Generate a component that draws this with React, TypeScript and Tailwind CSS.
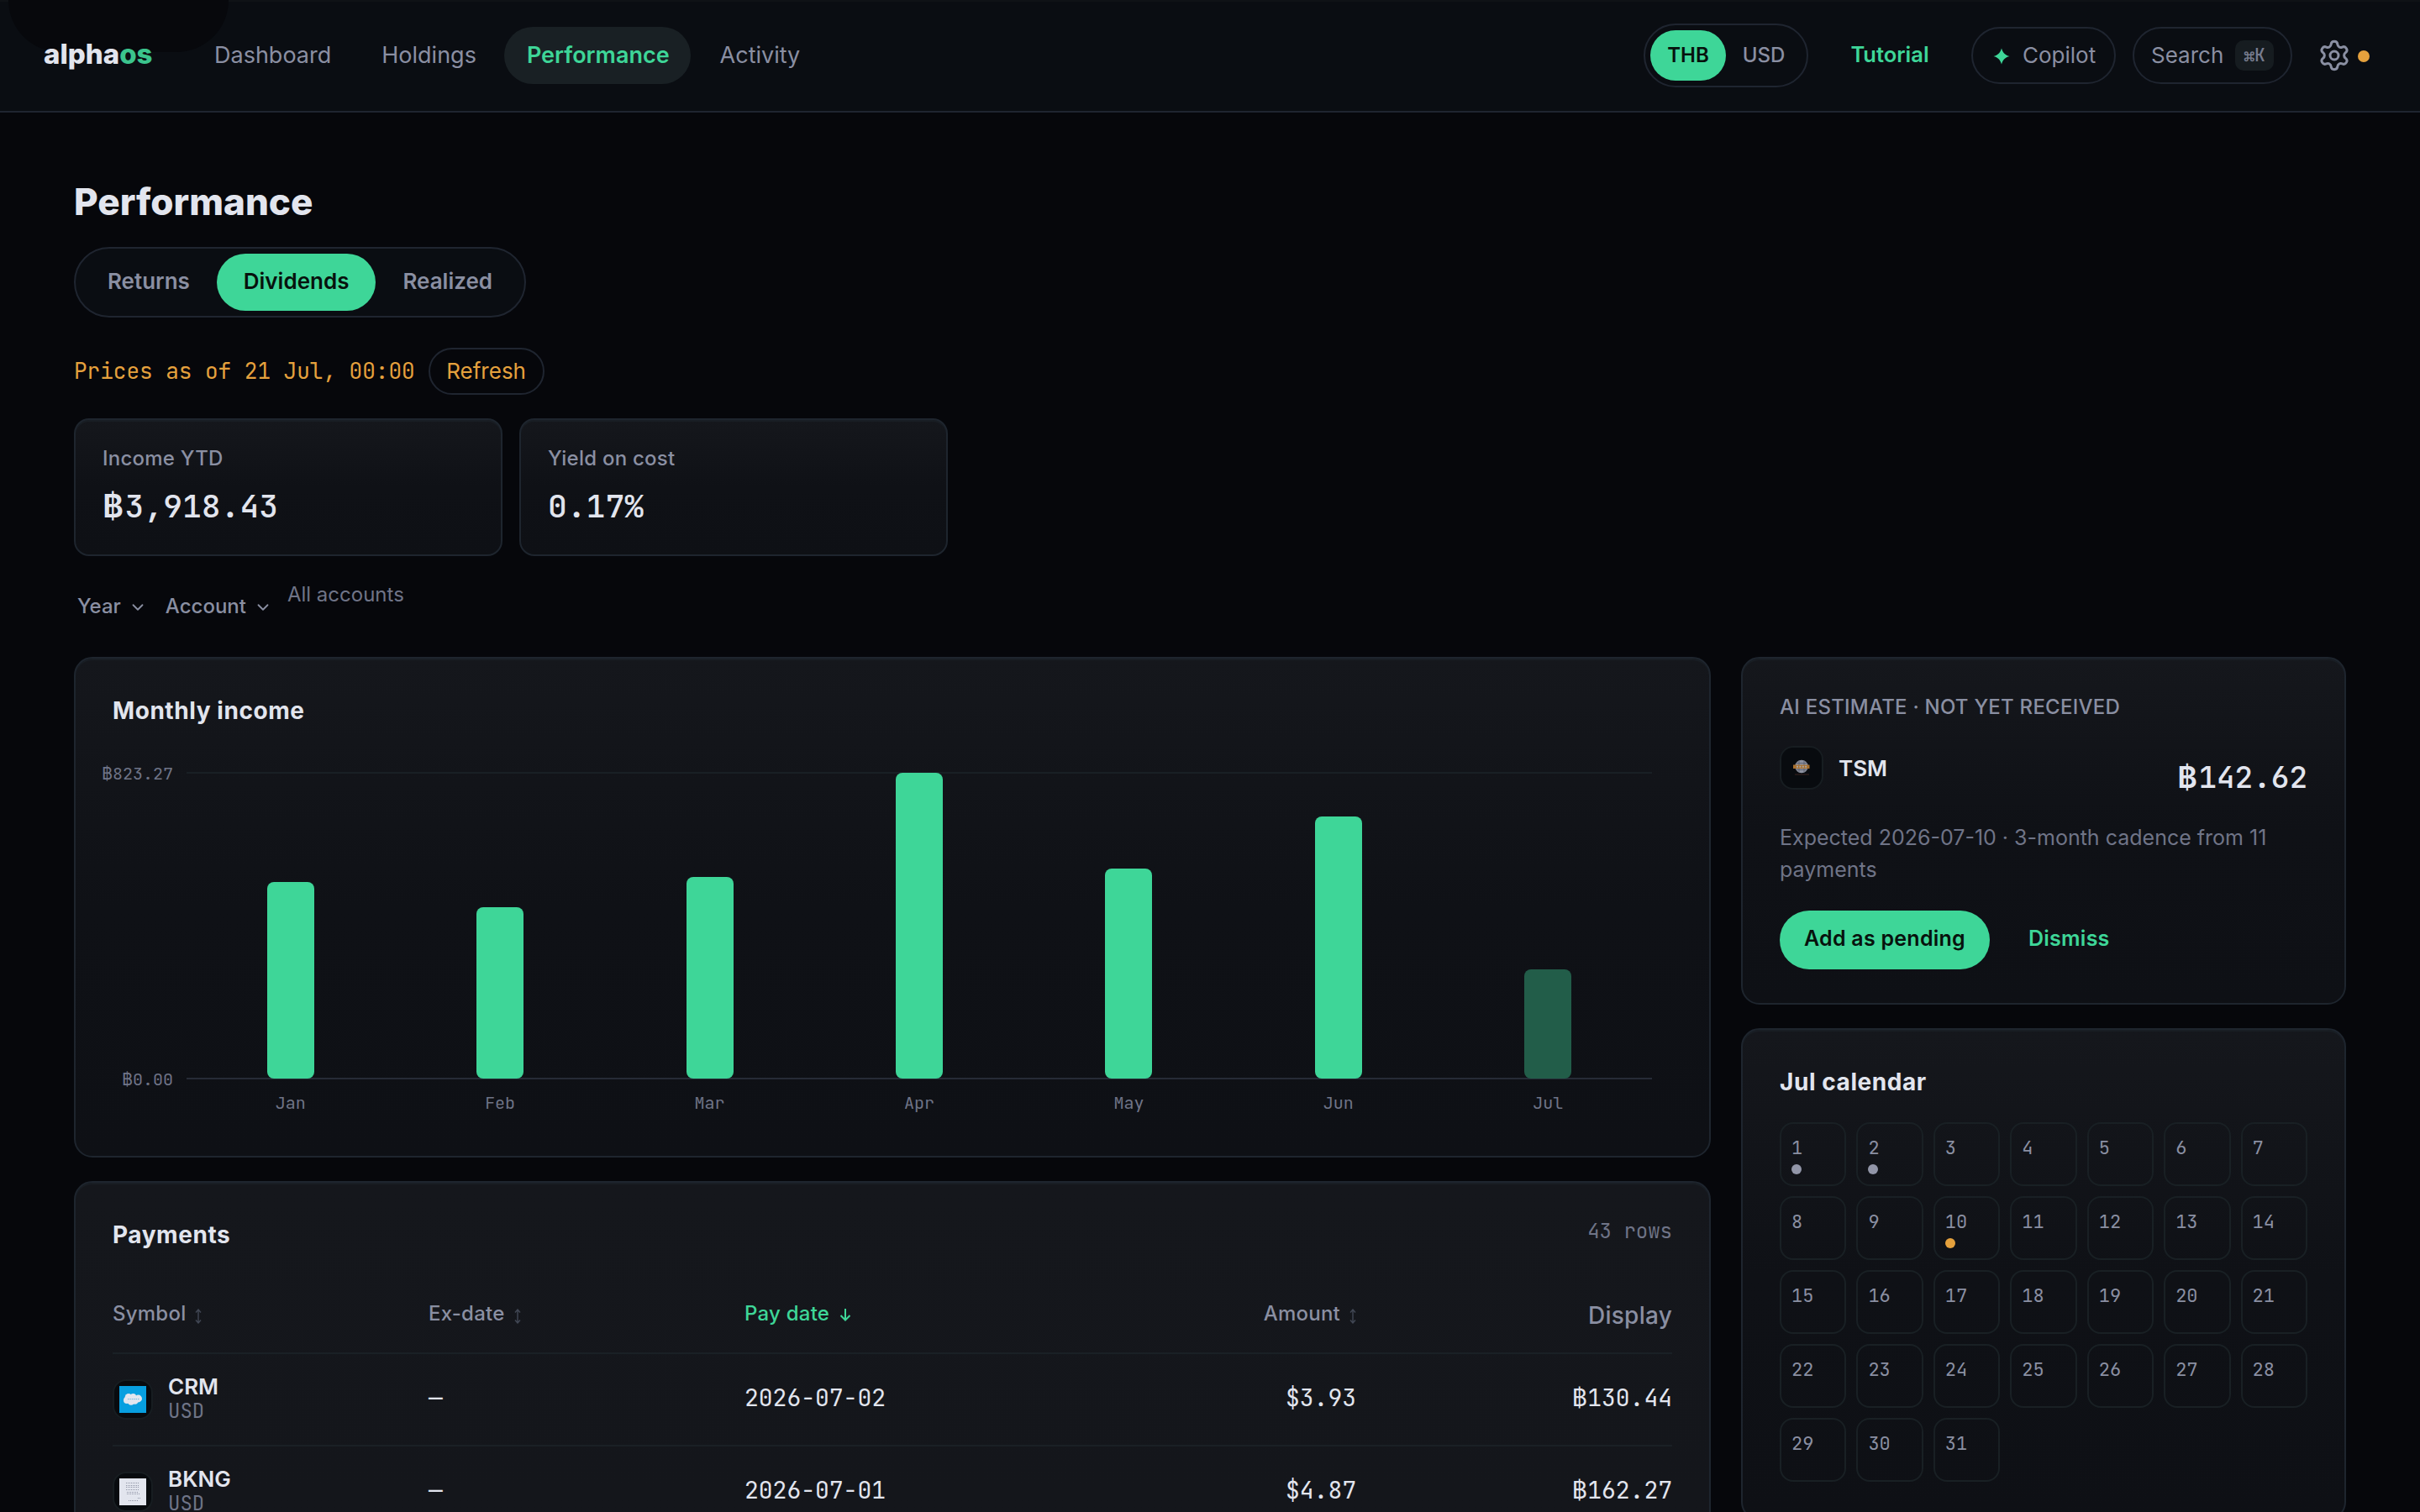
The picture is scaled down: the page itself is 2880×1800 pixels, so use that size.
import { ChevronDown, Settings } from "lucide-react";
import clsx from "clsx";
import type { ReactNode } from "react";

const NAV = ["Dashboard", "Holdings", "Performance", "Activity"];
const TABS = ["Returns", "Dividends", "Realized"];

const MONTHS = [
  { label: "Jan", height: 234 },
  { label: "Feb", height: 204 },
  { label: "Mar", height: 240 },
  { label: "Apr", height: 364 },
  { label: "May", height: 250 },
  { label: "Jun", height: 312 },
  { label: "Jul", height: 130, partial: true }
];

const PAYMENTS = [
  { symbol: "CRM", payDate: "2026-07-02", amount: "$3.93", display: "130.44" },
  { symbol: "BKNG", payDate: "2026-07-01", amount: "$4.87", display: "162.27" }
];

const DAYS = Array.from({ length: 31 }, (_, i) => i + 1);

const MONO = "font-['JetBrains_Mono','DejaVu_Sans_Mono',monospace]";

function Card({ className, children }: { className?: string; children: ReactNode }) {
  return (
    <section
      className={clsx(
        "border-2 border-[#1e252e] bg-gradient-to-b shadow-[inset_0_2px_0_#191e24]",
        className
      )}
    >
      {children}
    </section>
  );
}

// The mono face has a cramped baht sign, so it is always set in Inter.
function Baht({ value, strong }: { value: string; strong?: boolean }) {
  return (
    <span>
      <span className={clsx("font-[Inter,sans-serif]", strong && "mr-[0.04em] font-semibold")}>฿</span>
      {value}
    </span>
  );
}

function SortIcon() {
  return (
    <svg width="8" height="18" viewBox="0 0 8 18" fill="none" stroke="#414754" strokeWidth="1.4">
      <path d="M4 1v16M1 4.5 4 1l3 3.5M1 13.5 4 17l3-3.5" />
    </svg>
  );
}

function SalesforceLogo() {
  return (
    <svg width="32" height="32" viewBox="0 0 32 32">
      <rect width="32" height="32" fill="#079fe0" />
      <g fill="#e2e6ef">
        <circle cx="11" cy="13.2" r="4.3" />
        <circle cx="16.5" cy="12.6" r="3.6" />
        <circle cx="22.6" cy="15" r="4.4" />
        <circle cx="9" cy="17" r="4" />
        <circle cx="14" cy="18.6" r="4.2" />
        <circle cx="18.5" cy="18" r="3.8" />
      </g>
      <path d="M10 15.6h14" stroke="#6db5dc" strokeWidth="1" strokeDasharray="1.4 1" />
    </svg>
  );
}

function BookingLogo() {
  return (
    <svg width="32" height="32" viewBox="0 0 32 32">
      <rect width="32" height="32" fill="#e2e5ee" />
      <g stroke="#8f94a5" strokeWidth="1" strokeDasharray="1 1">
        <path d="M8 5.5h15M8 8.5h16M8 10.5h16M8 13.5h16M9 16.5h14M9 18.5h16" />
        <path d="M11 26.5h12M22 23.5h3" />
      </g>
    </svg>
  );
}

function TsmLogo() {
  return (
    <svg width="22" height="22" viewBox="0 0 22 22">
      <circle cx="11" cy="9.5" r="7.8" fill="#8d91a0" />
      <path
        d="M8 2.5v14M14 2.5v14M4 5.5h14M4 13.5h14"
        stroke="#555a68"
        strokeWidth="0.8"
      />
      <rect x="1" y="7.5" width="19.5" height="4.5" fill="#a8702f" />
      <path d="M5 9.7h12" stroke="#a9a6a4" strokeWidth="2" strokeDasharray="2 1.4" />
      <path d="M3 19h17" stroke="#33211d" strokeWidth="1.2" />
    </svg>
  );
}

function Header() {
  return (
    <header className="relative flex h-[134px] items-center overflow-hidden border-b-2 border-[#1f2530] bg-[#0a0d12] pr-[60px] pl-[52px] shadow-[inset_0_2px_0_#0f1216]">
      <div className="absolute -top-[62px] left-[10px] h-[124px] w-[262px] rounded-full bg-[#07080c]" />
      <div className="relative w-[130px] pb-[2px] text-[33px] font-extrabold text-[#e2e5ee]">
        alpha<span className="text-[#3bc48d]">os</span>
      </div>
      <nav className="ml-[46px] flex gap-2">
        {NAV.map((item) => (
          <a
            key={item}
            className={clsx(
              "flex h-[68px] items-center rounded-full pt-px pr-[25px] pl-[27px] text-[27px]",
              item === "Performance"
                ? "bg-[#192024] font-semibold text-[#3ed698]"
                : "text-[#8a8fa2]"
            )}
          >
            {item}
          </a>
        ))}
      </nav>
      <div className="ml-auto flex items-center">
        <div className="flex h-[76px] items-center rounded-full border-2 border-[#1f2530] p-[6px] text-[24px]">
          <button className="flex h-[60px] w-[90px] items-center justify-center rounded-full bg-[#3ed698] pb-px font-semibold text-[#07120d]">
            THB
          </button>
          <button className="flex h-[60px] w-[90px] items-center justify-center rounded-full pb-px font-medium text-[#8a8fa2]">
            USD
          </button>
        </div>
        <button className="w-[194px] pb-[2px] text-center text-[25.5px] font-semibold text-[#3ed698]">
          Tutorial
        </button>
        <button className="flex h-[68px] w-[172px] items-center rounded-full border-2 border-[#1f2530] pl-[24px] text-[26px] text-[#8a8fa2]">
          <svg width="20" height="20" viewBox="0 0 20 20" fill="#3ed698" className="mt-[2px] mr-[15px]">
            <path d="M10 0.5C11.4 5.6 14.4 8.6 19.5 10 14.4 11.4 11.4 14.4 10 19.5 8.6 14.4 5.6 11.4 0.5 10 5.6 8.6 8.6 5.6 10 0.5Z" />
          </svg>
          <span className="pb-[2px]">Copilot</span>
        </button>
        <button className="ml-5 flex h-[68px] w-[190px] items-center justify-between rounded-full border-2 border-[#1f2530] pr-[20px] pl-[20px] text-[26px] text-[#8a8fa2]">
          <span className="pb-[2px]">Search</span>
          <kbd
            className={clsx(
              MONO,
              "flex h-9 w-[46px] items-center justify-center rounded-[10px] bg-[#161c20] text-[21px] font-medium text-[#777c8f]"
            )}
          >
            ⌘K
          </kbd>
        </button>
        <div className="ml-[30px] flex items-center gap-2">
          <Settings size={40} strokeWidth={1.8} className="text-[#8a8fa2]" />
          <span className="mt-[2px] h-[14px] w-[14px] rounded-full bg-[#e5a13d]" />
        </div>
      </div>
    </header>
  );
}

function Stat({ label, children }: { label: string; children: ReactNode }) {
  return (
    <Card className="h-[164px] w-[510px] rounded-[18px] from-[#15171c] via-[#0f1116] to-[#0e1015] px-8 pt-[31px]">
      <p className="text-[24px] leading-[30px] font-medium tracking-[0.01em] text-[#8a8fa2]">{label}</p>
      <p className={clsx(MONO, "mt-[19px] text-[38px] leading-[44px] font-medium text-[#e2e5ee]")}>
        {children}
      </p>
    </Card>
  );
}

function Filter({ label }: { label: string }) {
  return (
    <button className="mt-[14px] flex items-center gap-[9px] text-[24px] leading-[30px] font-medium text-[#8a8fa2]">
      {label}
      <ChevronDown size={22} strokeWidth={2} className="mt-px" />
    </button>
  );
}

function MonthlyIncome() {
  return (
    <Card className="h-[596px] rounded-[22px] from-[#15171c] via-[#0f1116] to-[#0e1015] px-11 pt-11">
      <h2 className="text-[28px] leading-[36px] font-bold tracking-[0.02em] text-[#e2e5ee]">
        Monthly income
      </h2>
      <div className="mt-[55px] -ml-[26px] flex gap-4 pr-6">
        <div
          className={clsx(
            MONO,
            "-mt-[10px] flex h-[388px] w-[98px] flex-col justify-between text-right text-[20px] leading-6 text-[#6f7487]"
          )}
        >
          <Baht value="823.27" />
          <Baht value="0.00" />
        </div>
        <div className="flex-1">
          <div className="h-[366px] border-t-2 border-b-2 border-t-[#192025] border-b-[#262b36]">
            <div className="relative -top-px -mx-px grid h-[364px] grid-cols-7 items-end justify-items-center">
              {MONTHS.map((m) => (
                <div
                  key={m.label}
                  className={clsx(
                    "w-14 rounded-[8px]",
                    m.partial ? "bg-[#225d49]" : "bg-[#3ed698]"
                  )}
                  style={{ height: m.height }}
                />
              ))}
            </div>
          </div>
          <div
            className={clsx(
              MONO,
              "-mx-px mt-4 grid grid-cols-7 text-center text-[20px] leading-6 text-[#6f7487]"
            )}
          >
            {MONTHS.map((m) => (
              <span key={m.label}>{m.label}</span>
            ))}
          </div>
        </div>
      </div>
    </Card>
  );
}

function Payments() {
  return (
    <Card className="h-[2600px] rounded-[22px] from-[#15171c] to-[#0e1015] px-11 pt-11">
      <div className="flex justify-between">
        <h2 className="text-[28px] leading-[36px] font-bold tracking-[0.02em] text-[#e2e5ee]">
          Payments
        </h2>
        <span className={clsx(MONO, "text-[24px] leading-[28px] text-[#6f7487]")}>43 rows</span>
      </div>
      <div className="mt-[58px] grid h-[66px] grid-cols-5 gap-6 border-b-2 border-[#1a2025] text-[24px] leading-[36px] font-medium tracking-[0.01em] text-[#8a8fa2]">
        <div className="flex gap-[11px]">
          Symbol
          <span className="mt-[12px]">
            <SortIcon />
          </span>
        </div>
        <div className="flex gap-[11px]">
          Ex-date
          <span className="mt-[12px]">
            <SortIcon />
          </span>
        </div>
        <div className="flex gap-[12px] text-[#3ed698]">
          Pay date
          <svg width="14" height="16" viewBox="0 0 14 16" fill="none" stroke="currentColor" strokeWidth="2" className="mt-[11px]">
            <path d="M7 1v13M1.5 9 7 14.5 12.5 9" />
          </svg>
        </div>
        <div className="flex justify-end gap-[11px]">
          Amount
          <span className="mt-[12px]">
            <SortIcon />
          </span>
        </div>
        <div className="pt-[2px] text-right text-[28px]">Display</div>
      </div>
      {PAYMENTS.map((p) => (
        <div
          key={p.symbol}
          className={clsx(
            MONO,
            "grid h-[110px] grid-cols-5 items-center gap-6 border-b-2 border-[#1a2025] text-[28px] text-[#e2e5ee]"
          )}
        >
          <div className="flex items-center">
            <span className="flex h-12 w-12 items-center justify-center rounded-[16px] border-2 border-[#171d21] bg-[#080b0f]">
              {p.symbol === "CRM" ? <SalesforceLogo /> : <BookingLogo />}
            </span>
            <span className="ml-[18px] pb-[2px]">
              <span className="block font-[Inter,sans-serif] text-[26px] leading-[29px] font-semibold">
                {p.symbol}
              </span>
              <span className="block text-[24px] leading-[29px] text-[#6f7487]">USD</span>
            </span>
          </div>
          <span className="pb-[5px]">—</span>
          <span className="pb-[5px]">{p.payDate}</span>
          <span className="pb-[5px] text-right">{p.amount}</span>
          <span className="pb-[5px] text-right">
            <Baht value={p.display} />
          </span>
        </div>
      ))}
    </Card>
  );
}

function Estimate() {
  return (
    <Card className="h-[414px] rounded-[22px] from-[#15171c] via-[#0f1116] to-[#0e1015] px-11 pt-11">
      <p className="text-[24px] leading-[28px] font-medium tracking-[0.01em] text-[#8a8fa2]">
        AI ESTIMATE · NOT YET RECEIVED
      </p>
      <div className="mt-8 flex h-[52px] items-center">
        <span className="flex h-[52px] w-[52px] items-center justify-center rounded-[16px] border-2 border-[#171d21] bg-[#080b0f]">
          <TsmLogo />
        </span>
        <span className="ml-[18px] text-[26px] font-semibold text-[#e2e5ee]">TSM</span>
        <span className={clsx(MONO, "mt-[22px] ml-auto text-[36px] leading-[40px] font-medium text-[#e2e5ee]")}>
          <Baht value="142.62" strong />
        </span>
      </div>
      <p className="mt-[38px] text-[25px] leading-[38px] text-[#6f7487]">
        Expected 2026-07-10 · 3-month cadence from 11 payments
      </p>
      <div className="mt-[30px] flex text-[25px] font-semibold tracking-[0.01em]">
        <button className="flex h-[70px] w-[250px] items-center justify-center rounded-full bg-[#3ed698] pb-[3px] text-[#07120d]">
          Add as pending
        </button>
        <button className="ml-[46px] pb-[3px] text-[#3ed698]">Dismiss</button>
      </div>
    </Card>
  );
}

function Calendar() {
  return (
    <Card className="h-[586px] rounded-[22px] from-[#15171c] via-[#0f1116] to-[#0e1015] px-11 pt-11">
      <h2 className="text-[28px] leading-[36px] font-bold tracking-[0.02em] text-[#e2e5ee]">
        Jul calendar
      </h2>
      <div className={clsx(MONO, "mt-[30px] grid grid-cols-7 gap-3 text-[22px] leading-[26px] text-[#8a8fa2]")}>
        {DAYS.map((day) => (
          <div key={day} className="h-[76px] rounded-[16px] border-2 border-[#192024] px-3 pt-4">
            {day}
            {day < 3 || day === 10 ? (
              <span
                className={clsx(
                  "mt-[6px] block h-3 w-3 rounded-full",
                  day === 10 ? "bg-[#e5a13d]" : "bg-[#9296a8]"
                )}
              />
            ) : null}
          </div>
        ))}
      </div>
    </Card>
  );
}

export default function App() {
  return (
    <div className="h-[1800px] w-[2880px] overflow-hidden bg-[#06070b] font-[Inter,sans-serif]">
      <Header />
      <main className="px-[88px] pt-[78px]">
        <h1 className="text-[44px] leading-[56px] font-extrabold text-[#e2e5ee]">Performance</h1>
        <div className="mt-[26px] flex h-[84px] w-[538px] rounded-full border-2 border-[#1f2530] bg-[#0a0d12] p-[6px]">
          {TABS.map((tab) => (
            <button
              key={tab}
              className={clsx(
                "flex h-[68px] flex-auto items-center justify-center rounded-full pb-[3px] text-[26px] font-semibold",
                tab === "Dividends" ? "bg-[#3ed698] text-[#07120d]" : "text-[#8a8fa2]"
              )}
            >
              {tab}
            </button>
          ))}
        </div>
        <div className="mt-9 flex h-14 items-center gap-4 text-[26px] text-[#e5a13d]">
          <span className={clsx(MONO, "pb-[2px]")}>Prices as of 21 Jul, 00:00</span>
          <button className="flex h-14 w-[138px] items-center justify-center rounded-full border-2 border-[#1f2530] pb-[2px]">
            Refresh
          </button>
        </div>
        <div className="mt-7 flex gap-5">
          <Stat label="Income YTD">
            <Baht value="3,918.43" strong />
          </Stat>
          <Stat label="Yield on cost">0.17%</Stat>
        </div>
        <div className="mt-[31px] flex h-[89px] items-start pl-1">
          <Filter label="Year" />
          <span className="w-[22px]" />
          <Filter label="Account" />
          <span className="ml-[18px] text-[24px] leading-[30px] text-[#6f7487]">All accounts</span>
        </div>
        <div className="flex items-start gap-9">
          <div className="flex w-[1948px] flex-col gap-7">
            <MonthlyIncome />
            <Payments />
          </div>
          <div className="flex w-[720px] flex-col gap-7">
            <Estimate />
            <Calendar />
          </div>
        </div>
      </main>
    </div>
  );
}
